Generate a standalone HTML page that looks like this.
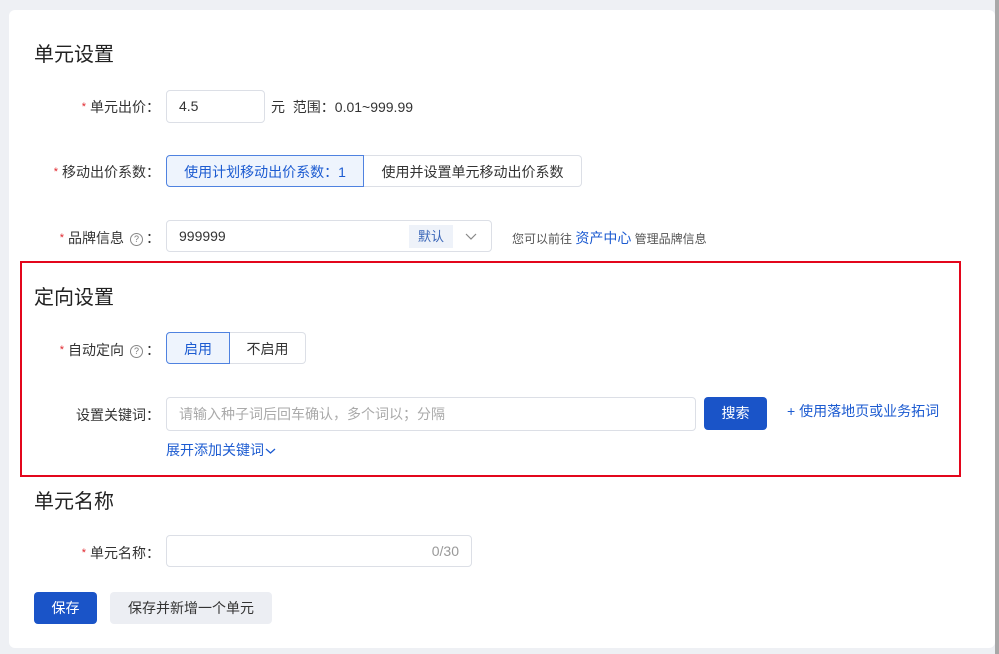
<!DOCTYPE html>
<html><head><meta charset="utf-8">
<style>
*{box-sizing:border-box;margin:0;padding:0}
html,body{width:999px;height:654px;overflow:hidden;background:#eef0f4;font-family:"Liberation Sans","Noto Sans CJK SC",sans-serif;color:#333;font-size:14px}
.card{position:absolute;left:9px;top:10px;width:986px;height:638px;background:#fff;border-radius:6px}
.rbar{position:absolute;left:995px;top:0;width:4px;height:654px;background:#a8a8a8}
.a{position:absolute;white-space:nowrap}
.h{font-size:20px;color:#222}
.lab{position:absolute;white-space:nowrap;right:839px;font-size:14px;color:#333;text-align:right}
.st{color:#e0262d;font-size:11px;margin-right:4px;position:relative;top:-2px}
.inp{position:absolute;border:1px solid #dcdfe6;border-radius:4px;background:#fff;height:32px;line-height:30px;padding-left:12px;font-size:14px}
.q{display:inline-block;width:13px;height:13px;border:1px solid #888;border-radius:50%;font-size:9px;line-height:11px;text-align:center;color:#777;margin:0 3px 0 6px;position:relative;top:-1px}
.blue{color:#1c5bd1}
.btn{position:absolute;height:32px;line-height:32px;text-align:center;border-radius:4px;font-size:14px}
</style></head><body>
<div class="card"></div>
<div class="rbar"></div>

<div class="a h" style="left:34px;top:38px">单元设置</div>

<div class="lab" style="top:97px"><span class="st">*</span>单元出价：</div>
<div class="inp" style="left:166px;top:90px;width:99px;height:33px">4.5</div>
<div class="a" style="left:271px;top:97px">元&nbsp;&nbsp;范围：0.01~999.99</div>

<div class="lab" style="top:162px"><span class="st">*</span>移动出价系数：</div>
<div class="btn" style="left:166px;top:155px;width:198px;border:1px solid #4f82e0;background:#eef4fd;color:#1c5bd1;border-radius:4px 0 0 4px">使用计划移动出价系数：1</div>
<div class="btn" style="left:364px;top:155px;width:218px;border:1px solid #dcdfe6;border-left:none;border-radius:0 4px 4px 0;color:#333">使用并设置单元移动出价系数</div>

<div class="lab" style="top:228px"><span class="st">*</span>品牌信息<span class="q">?</span>：</div>
<div class="inp" style="left:166px;top:220px;width:326px">999999</div>
<div class="a" style="left:409px;top:225px;width:44px;height:23px;background:#eef2f9;color:#3a66b8;font-size:13px;line-height:23px;text-align:center">默认</div>
<svg class="a" style="left:465px;top:231px" width="12" height="10"><path d="M1 3l5 5 5-5" fill="none" stroke="#888" stroke-width="1.2"/></svg>
<div class="a" style="left:512px;top:228px;font-size:12px;color:#555">您可以前往 <span class="blue" style="font-size:14px">资产中心</span> 管理品牌信息</div>

<div class="a" style="left:20px;top:261px;width:941px;height:216px;border:2px solid #e3061c"></div>
<div class="a h" style="left:34px;top:281px">定向设置</div>

<div class="lab" style="top:340px"><span class="st">*</span>自动定向<span class="q">?</span>：</div>
<div class="btn" style="left:166px;top:332px;width:64px;border:1px solid #4f82e0;background:#eef4fd;color:#1c5bd1;border-radius:4px 0 0 4px">启用</div>
<div class="btn" style="left:230px;top:332px;width:76px;border:1px solid #dcdfe6;border-left:none;border-radius:0 4px 4px 0;color:#333">不启用</div>

<div class="lab" style="top:405px">设置关键词：</div>
<div class="inp" style="left:166px;top:397px;width:530px;height:34px;line-height:32px;color:#aaa">请输入种子词后回车确认，多个词以；分隔</div>
<div class="btn" style="left:704px;top:397px;width:63px;height:33px;line-height:33px;background:#1a54c8;color:#fff">搜索</div>
<div class="a blue" style="left:787px;top:401px">+ 使用落地页或业务拓词</div>
<div class="a blue" style="left:166px;top:440px">展开添加关键词<svg width="11" height="8" style="margin-left:1px"><path d="M1 2l4.5 4 4.5-4" fill="none" stroke="#1c5bd1" stroke-width="1.3"/></svg></div>

<div class="a h" style="left:34px;top:485px">单元名称</div>
<div class="lab" style="top:543px"><span class="st">*</span>单元名称：</div>
<div class="inp" style="left:166px;top:535px;width:306px"><span style="position:absolute;right:12px;color:#999">0/30</span></div>

<div class="btn" style="left:34px;top:592px;width:63px;background:#1a54c8;color:#fff">保存</div>
<div class="btn" style="left:110px;top:592px;width:162px;background:#eceef3;color:#333">保存并新增一个单元</div>
</body></html>
